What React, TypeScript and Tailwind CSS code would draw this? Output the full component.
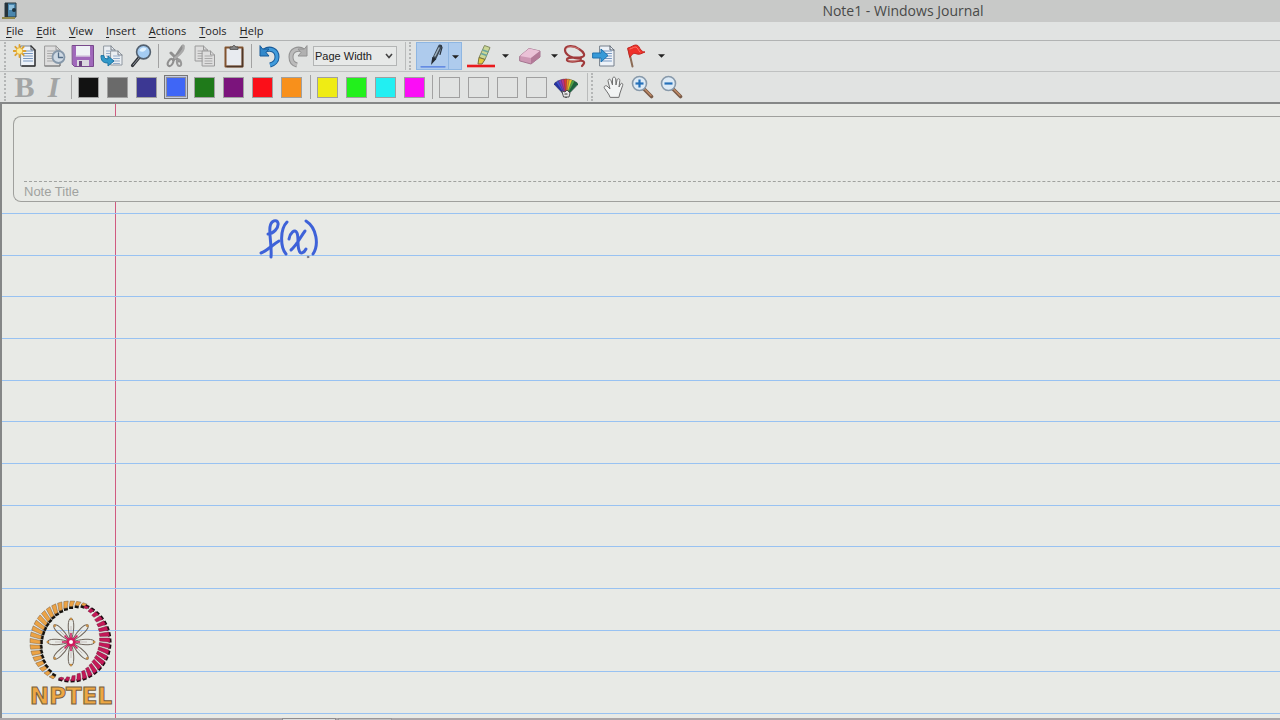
import type { ReactNode } from 'react';

const menus = ['File', 'Edit', 'View', 'Insert', 'Actions', 'Tools', 'Help'];

const inks = [
  { name: 'Black', fill: 'bg-[#121212]' },
  { name: 'Gray', fill: 'bg-[#6a6a6a]' },
  { name: 'Dark Blue', fill: 'bg-[#3c3893]' },
  { name: 'Blue', fill: 'bg-[#3f66f6]' },
  { name: 'Green', fill: 'bg-[#1f7a1a]' },
  { name: 'Purple', fill: 'bg-[#7b147c]' },
  { name: 'Red', fill: 'bg-[#fb0f19]' },
  { name: 'Orange', fill: 'bg-[#f8901b]' },
];

const highlights = [
  { name: 'Yellow', fill: 'bg-[#efec14]' },
  { name: 'Bright Green', fill: 'bg-[#22f01c]' },
  { name: 'Turquoise', fill: 'bg-[#22eff2]' },
  { name: 'Pink', fill: 'bg-[#fb0df6]' },
];

const emptySlots = [1, 2, 3, 4];
const ruledRows = [1, 2, 3, 4, 5, 6, 7, 8, 9, 10, 11, 12];

function Icon({ children }: { children: ReactNode }) {
  return (
    <svg viewBox="0 0 24 24" className="size-6 shrink-0" fill="none" strokeLinecap="round" strokeLinejoin="round" aria-hidden="true">
      {children}
    </svg>
  );
}

function Tool({ label, children }: { label: string; children: ReactNode }) {
  return (
    <button type="button" aria-label={label} className="flex h-7 w-[29px] shrink-0 items-center justify-center">
      {children}
    </button>
  );
}

function Arrow({ label }: { label: string }) {
  return (
    <button type="button" aria-label={label} className="flex h-7 w-3 shrink-0 items-center justify-center">
      <svg viewBox="0 0 8 4" className="h-1 w-[7px]" aria-hidden="true">
        <path d="M0 0H8L4 4Z" fill="#222" />
      </svg>
    </button>
  );
}

function Separator() {
  return (
    <div className="flex h-6 w-[6px] shrink-0 justify-center">
      <div className="w-px bg-[#a2a2a2]" />
    </div>
  );
}

function Grip() {
  return <div className="h-7 w-0 shrink-0 border-l-2 border-dotted border-[#b4b6b6]" />;
}

function Swatch({ name, fill, selected }: { name: string; fill: string; selected?: boolean }) {
  return (
    <button type="button" aria-label={name} className="flex h-7 w-[29px] shrink-0 items-center justify-center">
      {selected ? (
        <span className="flex size-6 items-center justify-center border border-[#777] bg-[#c4cbe0]">
          <span className={`size-5 border border-[#8e8e9c] ${fill}`} />
        </span>
      ) : (
        <span className={`size-[21px] border border-[#a0a0a0] ${fill}`} />
      )}
    </button>
  );
}

function Sheet({ x, y, w, h, muted }: { x: number; y: number; w: number; h: number; muted?: boolean }) {
  const line = muted ? '#a9a9a9' : '#7897c0';
  return (
    <g>
      <path
        d={`M${x} ${y}h${w - 4}l4 4v${h - 4}h${-w}z`}
        fill={muted ? '#dedede' : '#edf2f8'}
        stroke={muted ? '#9a9a9a' : '#77808c'}
        strokeWidth="1"
      />
      <path d={`M${x + w - 4} ${y}v4h4`} stroke={muted ? '#9a9a9a' : '#59616b'} strokeWidth="1" />
      {[5, 7.5, 10, 12.5, 15].filter((d) => d < h - 1).map((d) => (
        <path key={d} d={`M${x + 2.5} ${y + d}h${w - 5}`} stroke={line} strokeWidth="1" />
      ))}
    </g>
  );
}

function FileTools() {
  return (
    <div className="flex items-center">
      <Tool label="New Note">
        <Icon>
          <Sheet x={8} y={2} w={14} h={20} />
          <path d="M18 2l4 4v16H9" stroke="#333" strokeWidth="1.4" />
          <path d="M6.500 1v12M.5 7h12M2.300 2.800l8.400 8.400M10.700 2.800l-8.400 8.400" stroke="#dba12e" strokeWidth="1.800" />
          <circle cx="6.5" cy="7" r="3.300" fill="#ffec96" stroke="#e8b341" />
        </Icon>
      </Tool>
      <Tool label="Recent Notes">
        <Icon>
          <Sheet x={3} y={2} w={15} h={20} muted />
          <path d="M18 8v14H3" stroke="#777" />
          <circle cx="16.500" cy="13" r="6" fill="#cfdae4" stroke="#8698aa" strokeWidth="1.800" />
          <path d="M16.500 9v4.500h4" stroke="#536d87" strokeWidth="1.300" />
        </Icon>
      </Tool>
      <Tool label="Save">
        <Icon>
          <path d="M1.500 1.500h21v21h-19l-2-2z" fill="#a068bb" stroke="#78498c" />
          <path d="M5 2h14v10.500H5z" fill="#eef1f5" />
          <path d="M5 12h14" stroke="#c8b4d4" />
          <path d="M6 16h12v6H6z" fill="#dbd8df" />
          <path d="M8 17h3v5H8z" fill="#69427c" />
        </Icon>
      </Tool>
      <Tool label="Import">
        <Icon>
          <g opacity=".75">
            <Sheet x={4} y={2} w={11} h={14} />
            <Sheet x={11} y={7} w={11} h={14} />
          </g>
          <path d="M1 12c0 5 2 7 7 7v3l6-5-6-5v3c-3 0-4-1-4-3z" fill="#3199c9" stroke="#1c74a4" />
        </Icon>
      </Tool>
      <Tool label="Find">
        <Icon>
          <path d="M10.500 13L3.500 21.500" stroke="#303338" strokeWidth="3.200" />
          <path d="M10 14L4 21" stroke="#9298a0" strokeWidth="1" />
          <circle cx="14.500" cy="8" r="6.900" fill="#a4ccf3" stroke="#53606e" strokeWidth="1.600" />
          <path d="M10.500 7c.5-3 4-4.500 7-2.500-1 3-4 4-7 2.500z" fill="#e1f2ff" />
        </Icon>
      </Tool>
      <Separator />
      <Tool label="Cut">
        <Icon>
          <path d="M19 2c-3 4-6 9-9.500 14M7 9l8 8" stroke="#8f8f8f" strokeWidth="3" />
          <path d="M19 2c2 2-.5 7-8 12" stroke="#aaa" strokeWidth="2.200" />
          <ellipse cx="6.500" cy="18.500" rx="2.300" ry="3.800" transform="rotate(30 6.500 18.500)" stroke="#8f8f8f" strokeWidth="2" />
          <ellipse cx="15" cy="18.800" rx="2" ry="3.300" stroke="#999" strokeWidth="2" transform="rotate(-15 15 18.800)" />
        </Icon>
      </Tool>
      <Tool label="Copy">
        <Icon>
          <Sheet x={2.5} y={2} w={12} h={15} muted />
          <Sheet x={9.5} y={7} w={12} h={15} muted />
        </Icon>
      </Tool>
      <Tool label="Paste">
        <Icon>
          <rect x="3.500" y="3.500" width="17" height="19" fill="#e8ebf0" stroke="#81532f" strokeWidth="2" />
          <path d="M20.500 5v17.500H5" stroke="#4e3728" strokeWidth="1.500" />
          <path d="M8 5V3h2.500c0-2 3-2 3 0H16v2z" fill="#888" stroke="#555" />
        </Icon>
      </Tool>
      <Separator />
      <Tool label="Undo">
        <Icon>
          <path d="M7 7c6-4 13-1 13 6 0 4-3 7-7 8" stroke="#195b99" strokeWidth="5" strokeLinecap="butt" />
          <path d="M7 7c6-4 13-1 13 6 0 4-3 7-7 8" stroke="#419bdb" strokeWidth="3" strokeLinecap="butt" />
          <path d="M3 2v10h9L9 8.500 12 5 6 5z" fill="#3389cb" stroke="#195b99" />
        </Icon>
      </Tool>
      <Tool label="Redo">
        <Icon>
          <path d="M18 7C12 3 5 6 5 13c0 4 2 7 6 8" stroke="#929292" strokeWidth="5" strokeLinecap="butt" />
          <path d="M18 7C12 3 5 6 5 13c0 4 2 7 6 8" stroke="#bbb" strokeWidth="3" strokeLinecap="butt" />
          <path d="M21 2v10h-9l3-3.500L12 5l6 0z" fill="#b1b1b1" stroke="#929292" />
        </Icon>
      </Tool>
    </div>
  );
}

function ZoomLevel() {
  return (
    <div className="relative ml-px flex items-center">
      <select
        aria-label="Zoom"
        className="h-5 w-[84px] appearance-none border border-[#b3b5b5] bg-[#e7e9e8] pl-px text-[11px] leading-4 text-[#222]"
      >
        <option>Page Width</option>
        <option>Whole Page</option>
        <option>100%</option>
      </select>
      <svg viewBox="0 0 8 6" className="pointer-events-none absolute right-1 h-[6px] w-2" fill="none" aria-hidden="true">
        <path d="M1 1l3 3.500L7 1" stroke="#444" strokeWidth="1.600" />
      </svg>
    </div>
  );
}

function PenTools() {
  return (
    <div className="flex items-center">
      <div className="flex h-7 border border-[#8eb6e2] bg-[#aecbed]">
        <button type="button" aria-label="Pen" aria-pressed="true" className="flex w-8 items-center justify-center border-r border-[#8eb6e2]">
          <svg viewBox="0 0 28 24" className="h-6 w-7" fill="none" strokeLinecap="round" strokeLinejoin="round" aria-hidden="true">
            <path d="M2 22.800h24" stroke="#4d78e0" strokeWidth="1.300" />
            <path d="M21 2.500L15.500 14" stroke="#3c4854" strokeWidth="4" />
            <path d="M20 4L16 12" stroke="#9fb3c2" strokeWidth="1.500" />
            <path d="M13.300 13l4 2L12 21z" fill="#242b33" />
            <path d="M22 1.500l1 2-2 7" stroke="#2b3540" strokeWidth="1.200" />
          </svg>
        </button>
        <Arrow label="Pen Settings" />
      </div>
      <div className="ml-1 flex items-center">
        <Tool label="Highlighter">
          <svg viewBox="0 0 28 24" className="h-6 w-7" fill="none" aria-hidden="true">
            <path d="M17.500 1.500l5.500 2-5 12-6-2z" fill="#cbd795" stroke="#818a60" />
            <path d="M15.500 6l6 2M14 9.500l6 2" stroke="#6aa5a0" strokeWidth="1.800" />
            <path d="M12 13.500l6 2-3 4.500-4 0z" fill="#e4cc40" stroke="#77713b" />
            <path d="M0 22h28" stroke="#e91a1d" strokeWidth="2.600" />
          </svg>
        </Tool>
        <div className="w-1" />
        <Arrow label="Highlighter Settings" />
      </div>
      <div className="ml-1 flex items-center">
        <Tool label="Eraser">
          <Icon>
            <path d="M2 12L11 4.500l11 2.500v6L13 20 2 17z" fill="#cd98b4" stroke="#a57590" />
            <path d="M2 12l9-7.500L22 7l-9 7z" fill="#eac2d7" />
            <path d="M13 14v6l9-7V7z" fill="#b37a98" />
          </Icon>
        </Tool>
        <div className="w-1" />
        <Arrow label="Eraser Settings" />
      </div>
      <Tool label="Lasso">
        <Icon>
          <path d="M18 15C10 15 2 11 2 6c0-5 9-5 14-1 5 3 7 7 3 8-5 2-13-1-15 2-1 3 6 3 11 2 6-1 8 1 4 5" stroke="#a03a3b" strokeWidth="2.200" />
          <path d="M3 5c3-4 9-2 13 0M5 16c3 2 7 1 11 0" stroke="#d88784" strokeWidth=".8" />
        </Icon>
      </Tool>
      <Tool label="Insert Space">
        <Icon>
          <Sheet x={8} y={2} w={14} h={20} />
          <path d="M1 9h8V5l7 6.500L9 18v-4H1z" fill="#379ad8" stroke="#1e70ad" />
        </Icon>
      </Tool>
      <div className="ml-1 flex items-center">
        <Tool label="Flag">
          <Icon>
            <path d="M3.500 5l4 17.500" stroke="#8c6c56" strokeWidth="2" />
            <path d="M3 4c4-1 5-3 8-3 3 0 3 3 5 5 1 1 2 2 4 2-3 1-5 3-8 2-3-1-4-1-7 3z" fill="#ef3029" stroke="#c32722" />
            <path d="M5 5c3-1 4-2 6-2 2 1 2 3 4 5" stroke="#ff7568" />
          </Icon>
        </Tool>
        <div className="w-1" />
        <Arrow label="Flag Settings" />
      </div>
    </div>
  );
}

const fan = ['#2431a7', '#3f4fd0', '#7b3cc0', '#b8348f', '#e03736', '#ef8a26', '#e6cf2f', '#4ca446', '#1d6440'];

function PaletteIcon() {
  return (
    <Icon>
      {fan.map((color, i) => (
        <path key={color} d="M12 22L9.800 4.500Q12 3 14.200 4.500Z" fill={color} stroke="#333" strokeWidth=".3" transform={`rotate(${-36 + i * 9} 12 22)`} />
      ))}
      <path d="M8 16l3 1 2-2 3 3-1 4h-5z" fill="#e6e6e6" stroke="#444" strokeWidth=".9" />
      <path d="M11 19h2" stroke="#333" strokeWidth="1.200" />
    </Icon>
  );
}

function Magnifier({ plus }: { plus?: boolean }) {
  return (
    <Icon>
      <path d="M14 14l7.500 7.500" stroke="#795b48" strokeWidth="3.600" />
      <path d="M15 14.500l6 6" stroke="#c58c66" strokeWidth="1.300" />
      <circle cx="9.500" cy="8.500" r="7" fill="#dceaf6" stroke="#8799aa" strokeWidth="1.600" />
      <path d="M5.500 8.500h8" stroke="#2470ba" strokeWidth="2.200" strokeLinecap="butt" />
      {plus && <path d="M9.500 4.500v8" stroke="#2470ba" strokeWidth="2.200" strokeLinecap="butt" />}
    </Icon>
  );
}

function NptelLogo() {
  const segment = (deg: number, from: number, to: number) => {
    const t = (deg - from) / (to - from);
    return 1.5 + 9.5 * Math.sin(Math.PI * t);
  };
  const left = Array.from({ length: 20 }, (_, i) => 118 + i * 9);
  const right = Array.from({ length: 20 }, (_, i) => -66 + i * 9);
  return (
    <svg viewBox="0 0 84 84" className="size-[84px]" fill="none" aria-hidden="true">
      {left.map((deg) => {
        const len = segment(deg, 110, 297);
        return (
          <g key={deg} transform={`rotate(${deg} 42 42)`}>
            <path d={`M${80.5 - len} 39.500h3v4h-3z`} fill="#15120e" />
            <path d={`M${83 - len} 39.500L83 40.500v4.500L${83 - len} 43z`} fill="#eca345" stroke="#695036" strokeWidth=".4" />
          </g>
        );
      })}
      {right.map((deg) => {
        const len = segment(deg, -72, 111);
        return (
          <g key={deg} transform={`rotate(${deg} 42 42)`}>
            <path d="M79.500 40.500h3v4h-3z" fill="#19070e" />
            <path d={`M${81 - len} 39.500L81 40v4.300L${81 - len} 42.600z`} fill="#c51858" stroke="#65142f" strokeWidth=".4" />
          </g>
        );
      })}
      {[0, 45, 90, 135, 180, 225, 270, 315].map((deg) => (
        <g key={deg} transform={`rotate(${deg} 42 42)`}>
          <path d="M41 38C38.500 29 38.500 19 42 18c3.500 1 3.500 11 1 20" stroke="#6d645b" strokeWidth="1" />
          <path d="M42 35v-9" stroke="#b9b0ac" strokeWidth=".7" />
          <circle cx="42" cy="19" r="1.300" fill="#c58f48" />
          <path d="M42 38v-5" stroke="#cf1c5f" strokeWidth="1.500" />
        </g>
      ))}
      <circle cx="42" cy="42" r="3.300" fill="#fff" stroke="#cf1c5f" strokeWidth="2.600" />
    </svg>
  );
}

function Page() {
  return (
    <main className="relative flex flex-1 flex-col border-l-2 border-[#858787] bg-[#e8eae6]">
      <div className="absolute inset-y-0 left-[113px] w-px bg-[#d05a80]" />

      <section className="relative mt-3 ml-[11px] flex h-[86px] shrink-0 flex-col rounded-l-lg border border-r-0 border-[#9fa09d] bg-[#e8eae6] pl-[10px]">
        <input id="note-title" className="h-16 w-full bg-transparent outline-none" />
        <div className="border-t border-dashed border-[#a0a29f]" />
        <label htmlFor="note-title" className="pt-0.5 text-[13px] leading-4 text-[#a0a29f]">
          Note Title
        </label>
      </section>

      <div className="relative mt-[11px] flex flex-1 flex-col border-b border-[#98c2f2]">
        {ruledRows.map((row) => (
          <div key={row} className="flex-1 border-t border-[#98c2f2]" />
        ))}
        <svg viewBox="0 0 64 44" className="absolute top-1 left-[256px] h-11 w-16" fill="none" stroke="#3e62d8" strokeWidth="3" strokeLinecap="round" strokeLinejoin="round" role="img" aria-label="f(x)">
          <path d="M10 17C15 17 21 11 20 6c-1-4-7-3-8 4-1 8 2 19 1 30" />
          <path d="M3 36C9 34 14 28 21 24" />
          <path d="M29 5C22 12 22 30 28 37" />
          <path d="M31 22c1-6 6-11 8-6 2 5 0 12 2 17 1 5 5 3 7-1M47 14c-4 5-8 14-14 19" />
          <path d="M48 4c11 7 13 24 7 33" />
          <circle cx="50" cy="40" r=".8" stroke="#6f6d7c" strokeWidth="1" />
        </svg>
      </div>

      <div className="absolute bottom-2.5 left-[25px] flex w-[88px] flex-col items-center">
        <NptelLogo />
        <span className="font-['DejaVu_Sans',sans-serif] text-[23px] leading-6 font-bold text-[#eda743] [-webkit-text-stroke:1px_#77603f]">
          NPTEL
        </span>
      </div>
      <div className="h-1 shrink-0" />
    </main>
  );
}

export default function App() {
  return (
    <div className="flex h-screen min-h-[480px] flex-col overflow-hidden bg-[#e1e3e2] font-['Liberation_Sans',Arial,sans-serif] text-[#333]">
      <header className="relative flex h-[22px] shrink-0 items-center bg-[#c8c9c8] px-0.5">
        <svg viewBox="0 0 16 18" className="h-[18px] w-4" aria-hidden="true">
          <path d="M3 1h11v14H3z" fill="#4a86ad" stroke="#293a45" />
          <path d="M3 1h3v14H3z" fill="#26333b" />
          <path d="M7 3h5v5H7z" fill="#8dbfdd" />
          <circle cx="12" cy="8" r="2" fill="#1e3542" />
          <path d="M0 15h13v2H0z" fill="#938a4c" />
        </svg>
        <h1 className="ml-[510px] flex-1 text-center font-['Open_Sans','Noto_Sans',sans-serif] text-sm leading-5 text-[#494949]">Note1 - Windows Journal</h1>
      </header>

      <nav className="flex h-[19px] shrink-0 items-center gap-[13px] border-b border-[#b1b3b3] px-[6px] font-['Open_Sans','Noto_Sans',sans-serif] text-[11px] leading-4 text-[#222]">
        {menus.map((menu) => (
          <button key={menu} type="button">
            <span className="underline underline-offset-2">{menu[0]}</span>
            {menu.slice(1)}
          </button>
        ))}
      </nav>

      <div className="flex h-[31px] shrink-0 items-center border-b border-[#bfc1c1] pl-1">
        <Grip />
        <div className="w-1" />
        <FileTools />
        <ZoomLevel />
        <div className="ml-2 h-7 w-px bg-[#b9bbbb]" />
        <div className="w-[3px]" />
        <Grip />
        <div className="w-[5px]" />
        <PenTools />
      </div>

      <div className="flex h-8 shrink-0 items-center border-b-2 border-[#858787] pl-1">
        <Grip />
        <div className="w-1" />
        <button type="button" aria-label="Bold" className="w-[29px] text-center font-['Liberation_Serif',serif] text-[30px] leading-7 font-bold text-[#a3a5a5]">
          B
        </button>
        <button type="button" aria-label="Italic" className="w-[29px] text-center font-['Liberation_Serif',serif] text-[30px] leading-7 font-bold text-[#a3a5a5] italic">
          I
        </button>
        <Separator />
        {inks.map((ink) => (
          <Swatch key={ink.name} name={ink.name} fill={ink.fill} selected={ink.name === 'Blue'} />
        ))}
        <div className="w-px" />
        <Separator />
        {highlights.map((color) => (
          <Swatch key={color.name} name={color.name} fill={color.fill} />
        ))}
        <Separator />
        {emptySlots.map((slot) => (
          <Swatch key={slot} name={`Custom color ${slot}`} fill="bg-transparent" />
        ))}
        <Tool label="More Colors">
          <PaletteIcon />
        </Tool>
        <div className="ml-[7px] h-7 w-px bg-[#b9bbbb]" />
        <div className="w-[3px]" />
        <Grip />
        <div className="w-[5px]" />
        <Tool label="Pan">
          <Icon>
            <path
              d="M9 22c-1-3-3-5-5-8-2-2 0-4 2-3l3 3L7 6c0-2 2-2.500 3-.5l1.500 4.500V4c0-2.500 3-2.500 3.200 0l.3 6 1-5c.5-2 3-1.500 2.800.5L18 12l1.500-3c1-1.500 2.800-.5 2.200 1.300L19 18l-1 4z"
              fill="#f2f4f4"
              stroke="#707070"
              strokeWidth="1"
            />
          </Icon>
        </Tool>
        <Tool label="Zoom In">
          <Magnifier plus />
        </Tool>
        <Tool label="Zoom Out">
          <Magnifier />
        </Tool>
      </div>

      <Page />

      <footer className="flex h-0.5 shrink-0 bg-[#aaa5a8] pl-[282px]">
        <div className="w-[54px] border-x border-t border-[#8f8c8e] bg-[#dcdcdc]" />
        <div className="ml-0.5 w-[54px] border-x border-t border-[#999698] bg-[#c0bdbe]" />
      </footer>
    </div>
  );
}
